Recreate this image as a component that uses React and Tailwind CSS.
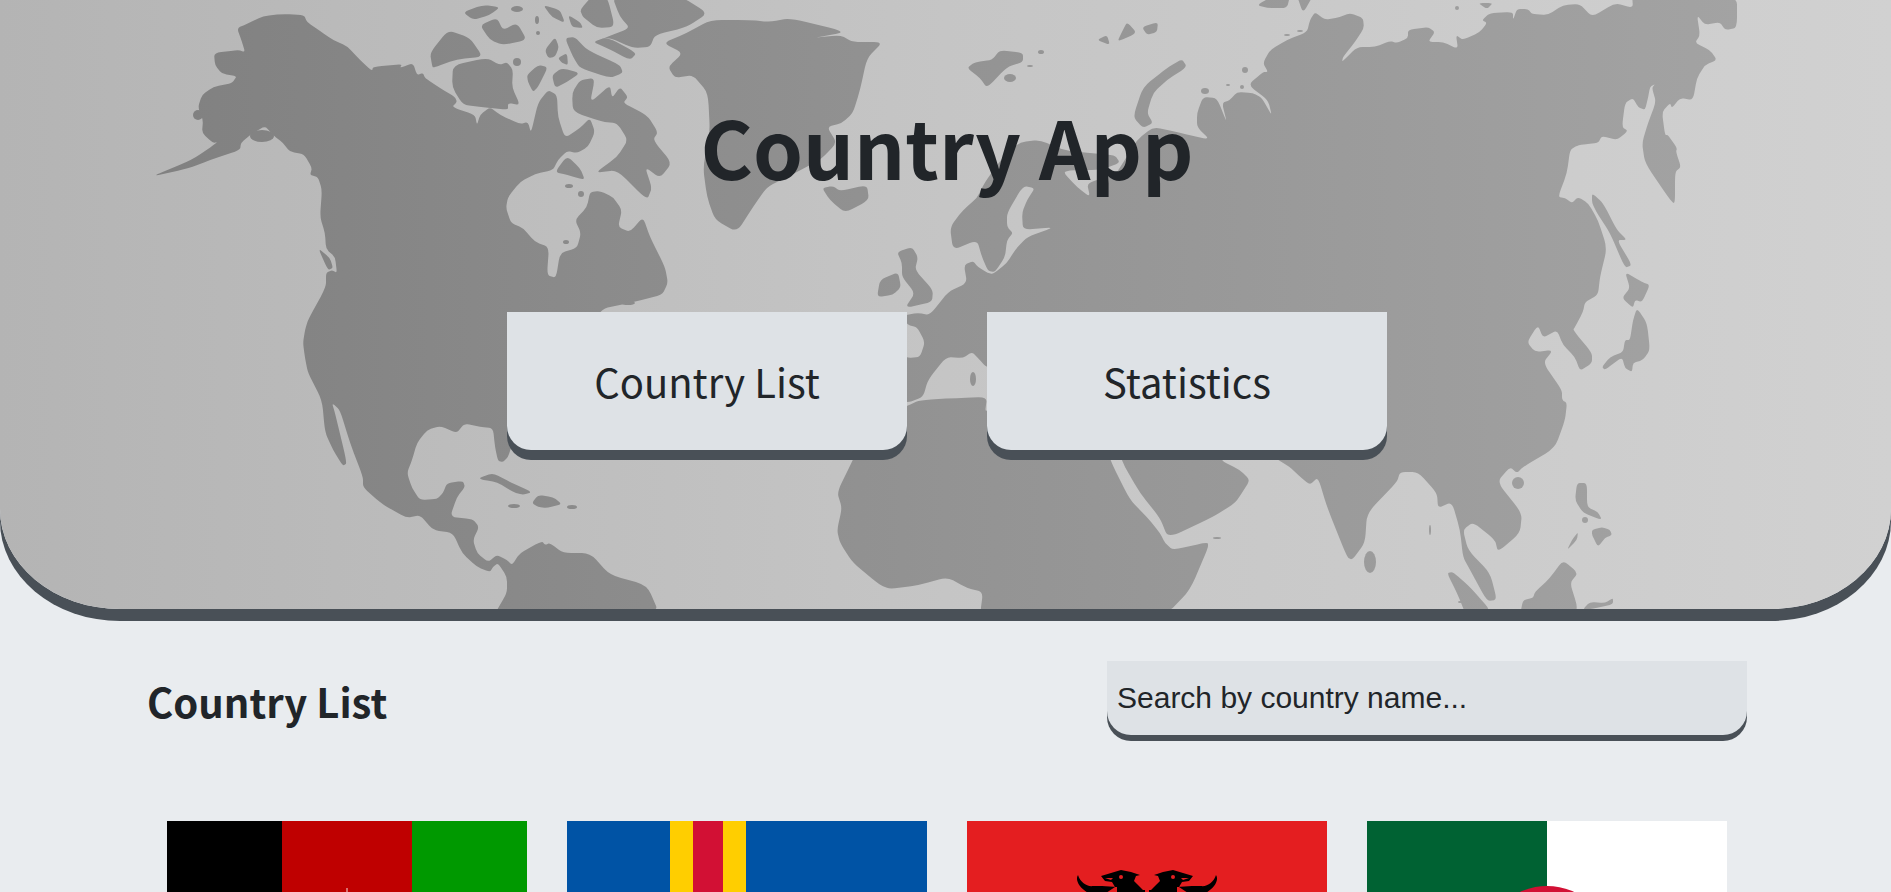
const land = [
  // north and central america, down to the top of south america
  '237,28 247,24 263,16 283,14 304,15 307,22 320,31 333,40 347,46 360,60 372,71 373,67 402,64 400,68 413,63 417,75 423,73 425,78 440,88 455,97 457,102 452,107 475,115 477,125 480,115 490,107 500,115 520,124 528,122 531,133 538,103 548,90 557,95 558,117 565,138 580,128 590,118 595,132 588,147 577,153 567,151 558,160 553,170 535,174 520,182 508,197 506,208 511,223 523,228 535,242 549,247 547,275 556,278 560,253 577,248 581,233 575,220 587,207 590,192 600,191 613,197 622,210 618,227 630,232 643,217 650,237 665,267 668,283 662,295 633,302 597,310 560,400 512,445 508,457 503,462 498,461 495,447 493,428 480,427 468,424 463,425 457,433 440,426 427,430 417,443 412,460 407,473 412,488 420,500 437,499 443,493 447,483 463,481 465,487 457,497 450,517 473,519 479,527 473,540 477,553 488,562 497,555 507,560 512,565 520,553 542,541 545,545 550,543 563,553 590,553 610,575 647,585 660,615 494,615 507,593 507,577 498,563 493,567 490,572 477,567 462,553 453,533 433,530 420,515 407,518 387,507 377,500 363,487 363,477 350,443 340,410 332,403 335,413 347,463 343,466 333,450 325,432 322,400 308,373 305,358 303,343 305,330 308,320 326,287 326,273 332,270 337,273 335,257 326,249 325,233 320,217 322,190 318,177 310,175 312,168 304,154 290,152 283,143 273,135 265,126 250,135 241,143 240,150 210,160 190,168 150,177 192,160 218,142 213,143 202,133 203,120 198,107 202,95 213,87 232,83 237,76 222,74 215,65 214,53 238,50 245,52 242,42',
  // canadian arctic
  '432,65 430,53 448,30 470,38 483,57 457,59 433,68',
  '453,65 487,58 500,65 507,62 513,70 512,87 520,105 508,103 508,110 483,107 463,105 452,87',
  '463,12 483,5 500,7 490,15 473,20',
  '480,25 497,18 503,30 517,23 527,40 503,45 490,40',
  '527,75 538,65 548,67 538,87 533,92 528,82',
  '552,75 562,68 580,73 567,82 555,88',
  '545,50 555,37 559,47 555,57 548,58',
  '558,58 567,53 568,65 562,63',
  '543,5 560,10 565,23 552,17',
  '568,15 580,22 583,28 572,27',
  '565,38 575,37 587,50 620,65 623,73 610,78 580,68 573,57',
  '580,10 592,-4 607,-4 615,27 597,28 583,17',
  '612,-4 680,-4 708,13 687,27 655,35 650,47 633,48 608,37 593,43 607,37 630,28 620,17',
  '593,42 607,37 637,53 630,60 607,48',
  '572,93 580,80 595,78 590,103 610,85 612,98 620,87 628,97 623,103 647,115 658,132 653,140 672,163 660,178 645,167 652,188 647,200 617,170 595,173 617,157 628,140 617,123 603,122 573,112',
  '555,172 567,156 580,168 585,180 567,175',
  '597,308 620,298 615,305',
  '318,248 330,258 333,268 328,270',
  // greenland, iceland
  '663,43 687,33 710,20 750,20 770,22 790,18 847,32 813,38 840,35 853,42 883,42 867,58 860,90 853,113 842,123 827,127 837,143 820,160 787,177 767,187 753,207 737,232 715,220 707,197 703,167 710,133 708,93 693,75 675,78 668,67 683,53',
  '822,188 833,186 840,191 867,185 869,200 845,213 830,200',
  // caribbean
  '479,478 493,473 510,482 532,492 523,495 513,492 497,482 483,480',
  '532,503 538,495 553,497 562,504 547,508 538,507',
  // britain, ireland, svalbard and the russian arctic
  '897,252 912,247 918,257 915,270 933,290 932,302 905,308 915,293 902,277 902,263',
  '877,297 880,280 898,272 901,287 893,295',
  '967,68 975,62 992,60 1000,50 1023,53 1023,62 1007,67 987,88 980,78',
  '1097,40 1107,35 1110,45',
  '1123,30 1127,22 1137,33 1117,42',
  '1142,27 1158,22 1157,32 1147,35',
  '1133,117 1143,87 1167,68 1182,59 1187,67 1167,80 1153,93 1147,113 1153,123 1143,128',
  '1257,5 1273,-4 1290,-4 1287,8 1267,8',
  '1297,-4 1313,-4 1303,13',
  '1478,3 1493,3 1487,9',
  // eurasia
  '880,395 880,345 907,358 920,357 925,342 917,327 907,325 905,315 918,313 930,315 948,292 967,283 964,265 973,261 978,267 988,273 993,274 1007,263 1015,250 1027,237 1055,227 1023,230 1022,213 1027,200 1035,188 1023,186 1007,213 1007,227 1013,233 1007,240 1005,257 995,272 988,271 982,257 977,240 953,250 950,227 963,210 977,198 985,182 1003,157 1020,142 1040,140 1063,150 1087,153 1115,155 1120,163 1100,170 1073,170 1063,172 1077,187 1090,197 1087,183 1115,175 1123,163 1137,140 1153,127 1177,132 1210,140 1197,127 1197,113 1203,97 1217,98 1227,123 1222,103 1230,100 1237,92 1253,93 1262,98 1272,116 1268,100 1248,85 1263,72 1268,72 1263,63 1270,50 1287,40 1307,32 1310,20 1315,12 1325,20 1340,17 1350,13 1363,18 1364,28 1355,42 1343,57 1342,62 1357,47 1375,47 1390,41 1397,43 1408,38 1408,30 1428,27 1435,32 1428,42 1443,42 1458,49 1456,35 1463,40 1480,32 1487,23 1482,20 1490,13 1513,12 1513,20 1517,9 1528,9 1532,14 1548,15 1563,5 1580,4 1592,17 1615,3 1633,8 1632,-6 1737,-6 1737,28 1725,30 1720,22 1705,25 1697,15 1700,35 1695,43 1710,50 1717,60 1705,65 1697,78 1693,100 1680,98 1672,108 1670,103 1662,112 1665,135 1668,135 1677,148 1676,152 1681,167 1675,172 1675,205 1668,197 1645,163 1642,143 1648,123 1656,102 1652,88 1655,84 1650,87 1648,98 1645,110 1638,107 1633,98 1625,103 1622,127 1628,131 1617,140 1602,136 1598,143 1578,145 1570,150 1567,173 1558,197 1565,198 1572,203 1578,197 1588,203 1598,220 1607,248 1600,277 1598,295 1585,302 1583,312 1575,327 1573,330 1592,353 1592,363 1580,371 1575,357 1563,345 1557,330 1543,338 1538,325 1527,342 1535,352 1553,350 1543,363 1562,390 1562,400 1567,403 1565,420 1555,448 1523,467 1517,473 1510,467 1497,482 1522,513 1520,533 1498,552 1495,540 1473,522 1463,530 1468,550 1490,573 1497,600 1487,601 1470,570 1463,557 1460,530 1452,502 1438,508 1437,493 1418,472 1400,472 1397,482 1367,513 1365,543 1352,560 1347,557 1327,507 1318,477 1310,485 1298,475 1290,467 1270,455 1230,450 1220,460 1240,470 1250,480 1242,493 1235,503 1213,517 1168,538 1160,518 1140,493 1122,462 1110,420 1040,400 1020,370 987,368 978,358 972,352 963,358 946,357 928,380 923,397 907,403',
  // africa
  '907,406 920,400 957,398 987,397 985,413 1000,400 1090,400 1110,460 1130,500 1147,517 1160,533 1165,543 1173,550 1208,542 1208,548 1190,590 1166,615 980,615 983,592 967,588 947,577 920,585 890,589 880,585 853,563 840,543 837,530 842,508 837,492 853,460 870,420',
  // south east asia, japan
  '1577,483 1587,483 1587,507 1598,512 1602,520 1583,513 1575,500',
  '1592,530 1602,527 1610,530 1612,535 1605,538 1598,547 1592,535',
  '1578,532 1577,540 1567,550 1572,540',
  '1563,560 1578,573 1570,583 1577,605 1576,615 1520,615 1523,600 1533,598 1535,592 1550,578',
  '1583,609 1590,602 1605,603 1613,598 1613,604 1602,607 1590,609',
  '1447,573 1453,572 1470,587 1492,612 1466,615 1457,593',
  '1637,308 1647,323 1650,350 1643,360 1633,363 1632,372 1625,368 1622,357 1605,370 1602,367 1610,357 1623,352 1625,340 1630,340 1633,320',
  '1625,272 1642,282 1650,285 1642,302 1635,300 1633,308 1622,298 1630,288',
  '1592,193 1603,203 1617,230 1627,240 1617,240 1632,265 1625,268 1610,233 1597,213 1592,203',
]

const smallIslands = [
  [198, 115, 5, 5], [262, 136, 12, 6], [517, 62, 4, 4], [517, 9, 6, 3], [537, 20, 2, 4], [538, 33, 2, 2],
  [569, 186, 4, 2], [581, 194, 3, 3], [566, 242, 3, 2], [628, 303, 7, 2], [514, 506, 6, 2], [572, 507, 5, 2],
  [1010, 78, 6, 4], [1030, 66, 3, 1], [1041, 52, 3, 2], [973, 379, 3, 7], [1217, 538, 4, 1], [1205, 91, 4, 3],
  [1228, 85, 2, 1], [1242, 87, 2, 2], [1245, 70, 3, 3], [1287, 35, 3, 1], [1300, 31, 3, 1], [1457, 8, 2, 2],
  [1370, 562, 6, 11], [1518, 483, 6, 6], [1585, 520, 3, 3], [1430, 530, 1, 5], [1460, 602, 2, 1],
]

// rounds every corner of a traced outline so the coasts don't look like cut paper
function roundedPath(points) {
  const pts = points.split(' ').map(p => p.split(',').map(Number))
  const toward = (a, b, t) => [a[0] + (b[0] - a[0]) * t, a[1] + (b[1] - a[1]) * t]
  let d = ''
  pts.forEach((p, i) => {
    const prev = pts[(i + pts.length - 1) % pts.length]
    const next = pts[(i + 1) % pts.length]
    const a = toward(p, prev, 0.3)
    const b = toward(p, next, 0.3)
    d += `${i === 0 ? 'M' : 'L'}${a[0]} ${a[1]}Q${p[0]} ${p[1]} ${b[0]} ${b[1]}`
  })
  return d + 'Z'
}

function WorldMap() {
  return (
    <svg className="absolute inset-0 w-full h-full" viewBox="0 0 1891 609" preserveAspectRatio="none">
      <defs>
        <linearGradient id="landFill" gradientUnits="userSpaceOnUse" x1="0" y1="0" x2="1891" y2="0">
          <stop offset="0" stopColor="#7d7d7d" />
          <stop offset="0.5" stopColor="#939393" />
          <stop offset="1" stopColor="#a6a6a6" />
        </linearGradient>
      </defs>
      <g fill="url(#landFill)">
        {land.map((points, i) => <path key={i} d={roundedPath(points)} />)}
        {smallIslands.map(([cx, cy, rx, ry], i) => <ellipse key={i} cx={cx} cy={cy} rx={rx} ry={ry} />)}
      </g>
    </svg>
  )
}

function AfghanistanFlag() {
  return (
    <svg viewBox="0 0 360 240" className="w-[360px] h-[240px]">
      <rect width="115" height="240" fill="#000000" />
      <rect x="115" width="130" height="240" fill="#bf0000" />
      <rect x="245" width="115" height="240" fill="#009900" />
      <rect x="179.5" y="67" width="1" height="4" fill="#f4dcdc" />
    </svg>
  )
}

function AlandFlag() {
  return (
    <svg viewBox="0 0 360 240" className="w-[360px] h-[240px]">
      <rect width="360" height="240" fill="#0053a5" />
      <rect x="103" width="76" height="240" fill="#ffce00" />
      <rect y="86" width="360" height="68" fill="#ffce00" />
      <rect x="126" width="30" height="240" fill="#d21034" />
      <rect y="104" width="360" height="32" fill="#d21034" />
    </svg>
  )
}

function EagleHalf() {
  return (
    <g>
      <path d="M-69 54 C-67 61 -60 66 -54 65 L-45 65 L-30 66 L-30 150 L-2 190 L-2 69 L-4 69 L-13 60 L-11 55 L-7 54 L-16 51 L-26 49 L-36 52 L-46 55 L-42 60 L-35 61 L-32 66 L-44 74 L-56 73 C-65 70 -73 60 -69 54 Z" fill="#000000" />
      <circle cx="-26" cy="56" r="2" fill="#e41e20" />
      <path d="M-42 57 L-34 57 L-36 59 Z" fill="#e41e20" />
    </g>
  )
}

function AlbaniaFlag() {
  return (
    <svg viewBox="0 0 360 240" className="w-[360px] h-[240px]">
      <rect width="360" height="240" fill="#e41e20" />
      <g transform="translate(180 0)">
        <EagleHalf />
        <g transform="scale(-1 1)">
          <EagleHalf />
        </g>
      </g>
    </svg>
  )
}

function AlgeriaFlag() {
  return (
    <svg viewBox="0 0 360 240" className="w-[360px] h-[240px]">
      <rect width="180" height="240" fill="#006233" />
      <rect x="180" width="180" height="240" fill="#ffffff" />
      <circle cx="180" cy="129" r="64" fill="#d21034" />
    </svg>
  )
}

const sourceSans = { fontFamily: '"Noto Sans CJK SC", "Noto Sans", sans-serif' }

function HeroButton({ children }) {
  return (
    <button className="w-[400px] h-[138px] bg-[#dee2e6] rounded-b-[24px] shadow-[0_10px_0_#495057] text-[40px] text-[#212529]">
      {children}
    </button>
  )
}

export default function App() {
  return (
    <div className="h-[892px] overflow-hidden bg-[#e9ecef] text-[#212529]" style={sourceSans}>
      <header className="relative h-[609px] rounded-b-[120px_100px] overflow-hidden shadow-[0_12px_0_#495057] bg-gradient-to-r from-[#b4b4b4] via-[#c5c5c5] to-[#d1d1d1]">
        <WorldMap />
        <div className="relative pl-[3px] pt-[97px] flex flex-col items-center">
          <h1 className="text-[80px] leading-[96px] font-bold mb-[119px]">Country App</h1>
          <div className="flex gap-[80px]">
            <HeroButton>Country List</HeroButton>
            <HeroButton>Statistics</HeroButton>
          </div>
        </div>
      </header>
      <main className="pl-[3px] pt-[52px]">
        <div className="w-[1600px] mx-auto">
          <div className="flex items-center justify-between h-[80px]">
            <h2 className="text-[40px] font-bold">Country List</h2>
            <input
              placeholder="Search by country name..."
              className="w-[640px] h-[74px] -mt-[6px] pl-[10px] bg-[#dee2e6] rounded-b-[24px] shadow-[0_6px_0_#495057] text-[30px] outline-none placeholder:text-[#212529] font-['Liberation_Sans',Arial,sans-serif]"
            />
          </div>
          <div className="grid grid-cols-4 gap-[40px] px-[20px] mt-[80px]">
            <AfghanistanFlag />
            <AlandFlag />
            <AlbaniaFlag />
            <AlgeriaFlag />
          </div>
        </div>
      </main>
    </div>
  )
}
